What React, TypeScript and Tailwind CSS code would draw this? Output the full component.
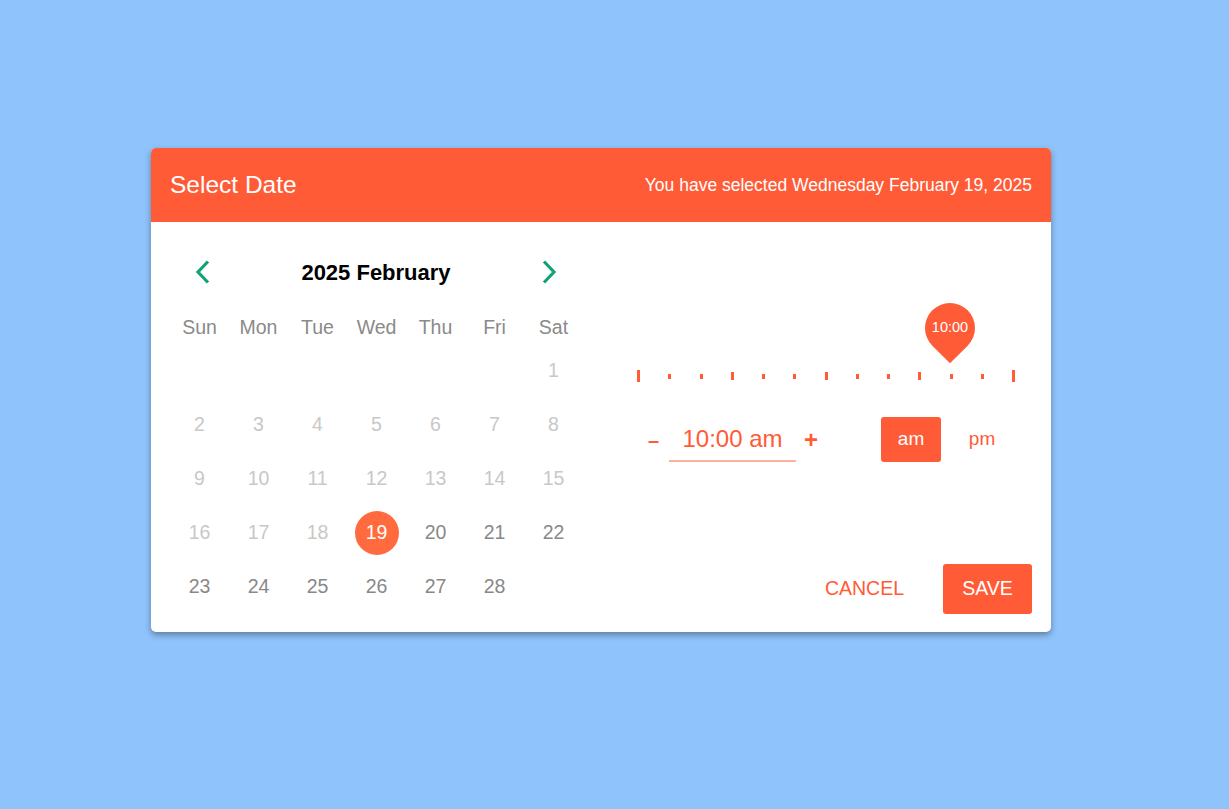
const ORANGE = "#ff5b37";

const weekDays = ["Sun", "Mon", "Tue", "Wed", "Thu", "Fri", "Sat"];

// 0 = blank, negative = past day (disabled)
const weeks: number[][] = [
  [0, 0, 0, 0, 0, 0, -1],
  [-2, -3, -4, -5, -6, -7, -8],
  [-9, -10, -11, -12, -13, -14, -15],
  [-16, -17, -18, 19, 20, 21, 22],
  [23, 24, 25, 26, 27, 28, 0],
];

// tick heights along the hour slider
const ticks = [12, 5, 5, 8, 5, 5, 8, 5, 5, 8, 5, 5, 12];

const Chevron = ({ dir }: { dir: "left" | "right" }) => (
  <svg width="16" height="24" viewBox="0 0 16 24" fill="none">
    <polyline
      points={dir === "left" ? "13,1.5 3,12 13,22.5" : "3,1.5 13,12 3,22.5"}
      stroke="#13a27c"
      strokeWidth="3.2"
      strokeLinecap="butt"
      strokeLinejoin="miter"
    />
  </svg>
);

const Calendar = () => (
  <div className="w-[413px] shrink-0">
    {/* Month header */}
    <div className="h-[50px] flex items-center justify-between pl-[25px] pr-[26px]">
      <button className="flex items-center">
        <Chevron dir="left" />
      </button>
      <h2 className="text-[22px] font-bold text-black">2025 February</h2>
      <button className="flex items-center">
        <Chevron dir="right" />
      </button>
    </div>

    {/* Week days */}
    <div className="grid grid-cols-7 mt-[13px] h-[34px] items-center">
      {weekDays.map((d) => (
        <div key={d} className="text-center text-[19.5px] text-[#8a8a8a] pt-[1px]">
          {d}
        </div>
      ))}
    </div>

    {/* Dates */}
    {weeks.map((week, i) => (
      <div key={i} className="grid grid-cols-7 h-[54px] items-center">
        {week.map((n, j) => (
          <div key={j} className="flex justify-center">
            {n === 19 ? (
              <span className="w-[44px] h-[44px] rounded-full bg-[#ff6b3e] text-white text-[19.5px] flex items-center justify-center">
                19
              </span>
            ) : n === 0 ? null : (
              <span
                className={
                  n < 0
                    ? "text-[19.5px] text-[#c8c8c8]"
                    : "text-[19.5px] text-[#888888]"
                }
              >
                {Math.abs(n)}
              </span>
            )}
          </div>
        ))}
      </div>
    ))}
  </div>
);

const TimePanel = () => (
  <div className="flex-1 flex flex-col">
    {/* Hour slider */}
    <div className="relative ml-[37px] w-[378px] h-[80px] mt-[56px] pt-[67px]">
      <div className="h-[12px] flex items-center justify-between">
        {ticks.map((h, i) => (
          <span
            key={i}
            className="w-[3px] bg-[#ff5b37]"
            style={{ height: h }}
          />
        ))}
      </div>
      <div className="absolute left-[288px] top-0 w-[50px] h-[50px]">
        <div className="absolute inset-0 bg-[#ff5b37] rounded-[50%_50%_50%_0] -rotate-45" />
        <span className="absolute inset-0 flex items-center justify-center text-white text-[14.5px]">
          10:00
        </span>
      </div>
    </div>

    {/* Time input row */}
    <div className="flex items-center ml-[48px] mt-[34px] h-[45px]">
      <button className="w-[11px] text-[20px] font-bold leading-none text-[#ff5b37]">
        –
      </button>
      <div className="ml-[10px] w-[127px] h-[45px] border-b-2 border-[#ffb19c] flex items-center justify-center text-[24px] text-[#ff5b37]">
        10:00 am
      </div>
      <button className="ml-[8px] text-[24px] font-bold leading-none text-[#ff5b37]">
        +
      </button>
      <button className="ml-[63px] w-[60px] h-[45px] rounded-[3px] bg-[#ff5b37] text-white text-[19px]">
        am
      </button>
      <button className="ml-[11px] w-[60px] h-[45px] text-[#ff5b37] text-[19px]">
        pm
      </button>
    </div>

    {/* Actions */}
    <div className="mt-auto flex justify-end items-center gap-[34px] pr-[19px]">
      <button className="w-[89px] h-[50px] text-[19.5px] text-[#ff5b37]">
        CANCEL
      </button>
      <button className="w-[89px] h-[50px] rounded-[3px] bg-[#ff5b37] text-white text-[19.5px]">
        SAVE
      </button>
    </div>
  </div>
);

export default function App() {
  return (
    <div
      className="min-h-screen bg-[#8fc3fb] pt-[148px] pl-[151px]"
      style={{ fontFamily: '"Liberation Sans", Arial, sans-serif' }}
    >
      <div className="w-[900px] bg-white rounded-[5px] overflow-hidden shadow-[0_3px_6px_rgba(0,0,0,0.35)]">
        {/* Header */}
        <div
          className="h-[74px] flex items-center justify-between px-[19px]"
          style={{ backgroundColor: ORANGE }}
        >
          <h1 className="text-[24.5px] text-white">Select Date</h1>
          <p className="text-[17.5px] text-white">
            You have selected Wednesday February 19, 2025
          </p>
        </div>

        {/* Body */}
        <div className="flex pl-[19px] pt-[25px] pb-[18px]">
          <Calendar />
          <div className="w-[17px]" />
          <TimePanel />
        </div>
      </div>
    </div>
  );
}
